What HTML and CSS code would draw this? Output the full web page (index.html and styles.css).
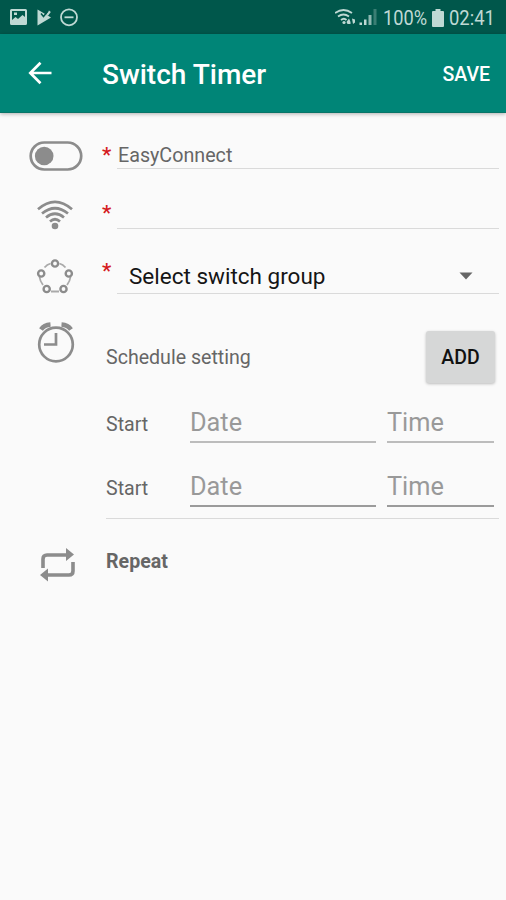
FILE: index.html
```html
<!DOCTYPE html>
<html lang="en">
<head>
<meta charset="utf-8">
<title>Switch Timer</title>
<link rel="stylesheet" href="styles.css">
</head>
<body>
<div class="status">
  <svg class="notices" width="72" height="34" viewBox="0 0 72 34">
    <path fill-rule="evenodd" d="M2.500 9h14q1.500 0 1.500 1.500v13q0 1.500-1.500 1.500h-14Q1 25 1 23.500v-13Q1 9 2.500 9zM3 11v9l3.500-3 2.500 2 4.500-4 2.500 2v-6zM5 12.500h3v2.500H5z"/>
    <path d="M28.500 9.500L42 17.500 28.500 25.500z"/><path d="M37 14.500l3-4 1.800 1.500-3 4z"/><path class="tick" d="M32 13.500l2.500 3 4.500-5.500"/>
    <circle class="line" cx="60" cy="17.300" r="8"/><path class="line" d="M55.500 17.300h9"/>
  </svg>
  <svg class="signal" width="46" height="34" viewBox="0 0 46 34">
    <path class="line" d="M0 13q8.500-6 17 0M3 16.500q5.500-4 11 0M6 20q3-2.500 5.500 0"/>
    <circle cx="9" cy="22.500" r="1.600"/><path d="M11.500 22l2.500-3.500 1.500 3.500v2h-3zM17 18.500l3 1v3l-2 1.500z"/>
    <path d="M24.500 22.500H27V25h-2.500zM29 19.500h2.500V25H29z"/><path opacity=".75" d="M33.500 15h3v10h-3z"/><path opacity=".3" d="M38.500 9h3v16h-3z"/>
  </svg>
  <span class="percent">100%</span>
  <svg class="battery" width="12" height="18" viewBox="0 0 12 18"><path d="M3.500 0h5v2H11q1 0 1 1v14q0 1-1 1H1q-1 0-1-1V3q0-1 1-1h2.500z"/></svg>
  <span class="clock">02:41</span>
</div>
<header class="bar">
  <svg class="back" width="24" height="24" viewBox="0 0 24 24"><path d="M23.500 12H2.500M12.500 1.700L2.300 12l10.200 10.300"/></svg>
  <h1>Switch Timer</h1>
  <span class="save">SAVE</span>
</header>
<main>
  <section class="row name">
    <svg class="icon" width="56" height="32" viewBox="0 0 56 32"><rect x="2.700" y="2.500" width="50.500" height="27" rx="13.500"/><circle class="solid" cx="16.200" cy="16" r="9.300"/></svg>
    <span class="star">*</span>
    <div class="field">EasyConnect</div>
  </section>
  <section class="row network">
    <svg class="icon" width="40" height="32" viewBox="0 0 40 32"><path d="M3 10.300Q20-4.500 37 10.300M7 14.500q13-10.500 26 0M11 18.500q9-7.500 18 0M15 22.500q5-4.500 10 0"/><circle class="solid" cx="20" cy="27" r="3.300"/></svg>
    <span class="star">*</span>
    <div class="field"></div>
  </section>
  <section class="row group">
    <svg class="icon" width="40" height="36" viewBox="0 0 40 36"><path class="thin" d="M9.500 8.500Q12 5.500 15.500 4.500M24.500 4.500Q28 5.500 30.500 8.500M4.500 18Q5 22 8 26M35.500 18Q35 22 32 26M16 32.500h8"/><g class="nodes"><circle cx="20" cy="4.500" r="3.100"/><circle cx="6.200" cy="14.500" r="3.100"/><circle cx="33.800" cy="14.500" r="3.100"/><circle cx="11.700" cy="30" r="3.100"/><circle cx="28.500" cy="30" r="3.100"/></g></svg>
    <span class="star">*</span>
    <div class="field select">Select switch group
      <svg width="14" height="8" viewBox="0 0 14 8"><path d="M.5.500h13L7 7.500z"/></svg>
    </div>
  </section>
  <section class="row schedule">
    <svg class="icon" width="40" height="42" viewBox="0 0 40 42"><circle cx="20" cy="23.500" r="16.800"/><path d="M20 12v11.500H8"/><path class="bell" d="M5 8.500Q8 4 14.500 3.500M25.500 3.500Q32 4 35 8.500"/></svg>
    <span class="label">Schedule setting</span>
    <button class="add">ADD</button>
  </section>
  <div class="times">
    <div class="entry"><span class="label">Start</span><div class="input">Date</div><div class="input">Time</div></div>
    <div class="entry dark"><span class="label">Start</span><div class="input">Date</div><div class="input">Time</div></div>
  </div>
  <section class="row repeat">
    <svg class="icon" width="40" height="36" viewBox="0 0 40 36"><path class="thick" d="M5 21V12q0-4 4-4h20M35 15v9q0 4-4 4H10"/><path class="solid" d="M28 1l8 6.500-8 6.500zM10 21.500L2 28l8 6.500z"/></svg>
    <span class="label strong">Repeat</span>
  </section>
</main>
</body>
</html>
```
FILE: styles.css
```css
* { box-sizing: border-box; }
body { margin: 0; height: 900px; overflow: hidden; background: #fafafa; font-family: Roboto, sans-serif; color: #666; }
svg { display: block; flex: none; }
.status { height: 34px; background: #00574b; color: #bfd9d4; fill: #bfd9d4; display: flex; align-items: center; padding: 2px 0 0 9px; }
.status svg.notices, .status svg.signal { margin-top: -2px; }
.status .line { fill: none; stroke: #bfd9d4; stroke-width: 1.8; }
.status .tick { fill: none; stroke: #00574b; stroke-width: 1.5; }
.signal { margin-left: 254px; }
.percent, .clock { font-size: 20.5px; line-height: 32px; white-space: nowrap; transform-origin: 0 50%; }
.percent { width: 45px; margin-left: 2px; transform: scaleX(.89); }
.clock { transform: scaleX(.9); }
.battery { margin: 0 5px 0 4px; }
.bar { height: 79px; background: #008577; color: #fff; display: flex; align-items: center; padding: 0 16px 0 28px; border-bottom: 1px solid #087568; box-shadow: 0 1px 4px rgba(0,0,0,.3); position: relative; }
.back { fill: none; stroke: #fff; stroke-width: 2.7; }
h1 { margin: 4px 0 0 50px; font-size: 28px; line-height: 34px; font-weight: 500; flex: 1; white-space: nowrap; }
.save { font-size: 19.5px; font-weight: 500; margin-top: 3px; }
.row { display: grid; grid-template-columns: 106px 11px 1fr; align-items: start; padding-right: 7px; }
.icon { justify-self: center; margin-left: 4px; fill: none; stroke: #8c8c8c; stroke-width: 2.7; }
.icon .solid { fill: #8c8c8c; stroke: none; }
.icon .thin { stroke: #aaa; stroke-width: 1.8; }
.icon .nodes { stroke: #8c8c8c; stroke-width: 2.4; }
.icon .bell { stroke-width: 4.5; }
.icon .thick { stroke-width: 3.6; }
.star { color: #d51a20; font-size: 21px; line-height: 24px; margin-left: -4px; font-weight: 500; }
.field { border-bottom: 1px solid #dadada; font-size: 19.7px; line-height: 24px; padding-left: 1px; }
.name { height: 56px; }
.name .icon { margin: 27px 0 0 5px; }
.name .star { margin-top: 30px; }
.name .field { height: 56px; padding-top: 31px; }
.network { height: 60px; }
.network .icon { margin: 30px 0 0 4px; }
.network .star { margin-top: 32px; }
.network .field { height: 60px; }
.group { height: 65px; }
.group .icon { margin-top: 30px; }
.group .star { margin-top: 30px; }
.group .field { height: 65px; }
.select { padding: 33px 26px 0 12px; font-size: 22.5px; line-height: 28px; color: #151515; display: flex; justify-content: space-between; }
.select svg { fill: #666; margin-top: 10px; }
.schedule { grid-template-columns: 106px 1fr 69px; height: 96px; padding-right: 11px; }
.schedule .icon { margin: 27px 0 0 6px; }
.label { font-size: 19.6px; line-height: 24px; white-space: nowrap; }
.schedule .label { margin-top: 52px; }
.add { margin: 37px 0 0; padding: 0; height: 52px; border: 0; border-radius: 3px; background: #d6d7d7; box-shadow: 0 1px 3px rgba(0,0,0,.25); font: 500 19.5px Roboto, sans-serif; color: #111; }
.times { margin: 0 7px 0 106px; height: 129px; border-bottom: 1px solid #dadada; }
.entry { display: grid; grid-template-columns: 73px 186px 107px; column-gap: 11px; height: 64px; padding-top: 17px; }
.entry .label { margin-top: 6px; }
.input { height: 36px; font-size: 25.3px; line-height: 32px; color: #999; border-bottom: 2px solid #bcbcbc; }
.dark .input { border-color: #9b9b9b; line-height: 31px; }
.repeat { grid-template-columns: 106px 1fr; }
.repeat .icon { margin: 28px 0 0 9px; }
.repeat .label { margin-top: 31px; }
.strong { font-weight: 700; }
```
